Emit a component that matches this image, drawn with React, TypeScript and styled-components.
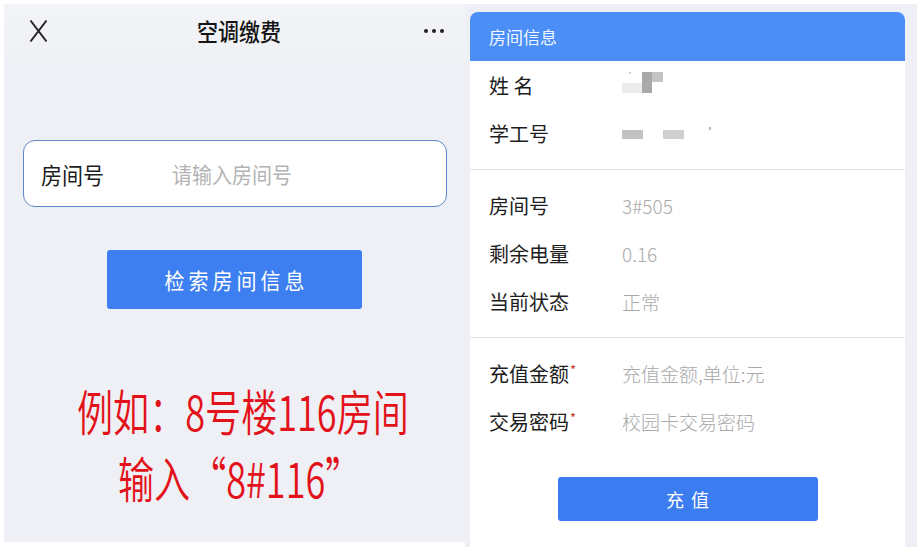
import React from "react"
import styled, { createGlobalStyle } from "styled-components"

const GlobalStyle = createGlobalStyle`
    html, body {
        margin: 0;
        padding: 0;
        background: #ffffff;
    }
    body {
        font-family: "Noto Sans CJK SC", "Noto Sans", sans-serif;
    }
`

const Page = styled.div`
    display: flex;
    width: 922px;
    height: 547px;
    padding: 4px 5px 0 4px;
    box-sizing: border-box;
    overflow: hidden;
`

// left screen: search
const SearchScreen = styled.div`
    width: 461px;
    height: 538px;
    background: #eef0f5;
    display: flex;
    flex-direction: column;
`

const TopBar = styled.div`
    height: 54px;
    display: flex;
    align-items: center;
    justify-content: space-between;
    padding: 0 21px 0 25px;
    background: linear-gradient(#f3f4f7, #f0f1f5);
`

const Title = styled.span`
    font-size: 21px;
    font-weight: 500;
    color: #151515;
    transform: scaleY(1.15);
    margin-left: 6px;
`

const Dots = styled.div`
    display: flex;
    gap: 4px;
    & span {
        width: 4px;
        height: 4px;
        border-radius: 50%;
        background: #222;
    }
`

const InputBox = styled.div`
    margin: 82px 18px 0 19px;
    height: 67px;
    box-sizing: border-box;
    border: 1.5px solid #5f88c6;
    border-radius: 12px;
    background: #fff;
    display: flex;
    align-items: center;
    padding-left: 17px;
`

const InputLabel = styled.span`
    width: 131px;
    font-size: 21px;
    color: #1c1c1c;
    transform: scaleY(1.1);
`

const Placeholder = styled.span`
    font-size: 20px;
    color: #b3b3b3;
    transform: scaleY(1.1);
`

const SearchButton = styled.div`
    align-self: center;
    margin-top: 43px;
    width: 255px;
    height: 59px;
    border-radius: 3px;
    background: #3d7ff1;
    color: #fff;
    display: flex;
    align-items: center;
    justify-content: center;
    font-size: 20px;
    letter-spacing: 4px;
    & span {
        transform: scaleY(1.1);
        margin-right: -4px;
    }
`

const Tip = styled.div`
    margin-top: 68px;
    color: #e3121a;
    font-family: "Noto Sans CJK SC", sans-serif;
`

const TipLine = styled.div<{ $indent: number }>`
    font-size: 44px;
    font-weight: 350;
    line-height: 67px;
    white-space: nowrap;
    padding-left: ${(p) => p.$indent}px;
    transform-origin: ${(p) => p.$indent}px 50%;
    transform: scale(0.82, 1.1);
`

// right screen: room info
const InfoScreen = styled.div`
    flex: 1;
    background: #eef0f6;
    padding: 8px 12px 0 5px;
    display: flex;
`

const Card = styled.div`
    flex: 1;
    background: #fff;
    border-radius: 8px 8px 0 0;
    overflow: hidden;
`

const CardHeader = styled.div`
    height: 49px;
    background: #4a8ef6;
    color: #f2f6ff;
    font-size: 17px;
    display: flex;
    align-items: center;
    padding-left: 19px;
`

const Section = styled.div<{ $first?: boolean; $last?: boolean }>`
    padding: ${(p) => (p.$first ? "0 0 12px" : "11px 0 12px")};
    border-bottom: ${(p) => (p.$last ? "none" : "1px solid #e6e4e2")};
    display: flex;
    flex-direction: column;
`

const Row = styled.div`
    height: 48px;
    display: flex;
    align-items: center;
    padding-left: 19px;
`

const Label = styled.span`
    width: 133px;
    font-size: 20px;
    color: #1d1d1d;
    white-space: pre;
    & sup {
        color: #c0392b;
        font-size: 13px;
        vertical-align: 7px;
        margin-left: 1px;
    }
`

const Value = styled.span`
    font-size: 19px;
    color: #a9a9a9;
    font-weight: 300;
`

const Blur = styled.svg`
    display: block;
`

const PayButton = styled.div`
    align-self: center;
    margin-top: 32px;
    width: 260px;
    height: 44px;
    border-radius: 3px;
    background: #3b7cf0;
    color: #fff;
    font-size: 18px;
    letter-spacing: 7px;
    display: flex;
    align-items: center;
    justify-content: center;
    & span {
        margin-right: -7px;
    }
`

const CloseIcon = () => (
    <svg width="19" height="24" viewBox="0 0 19 24">
        <path d="M1.5 1.5 L17.5 22.5 M17.5 1.5 L1.5 22.5" stroke="#222" strokeWidth="2" fill="none" />
    </svg>
)

const NameBlur = () => (
    <Blur width="44" height="26" viewBox="0 0 44 26">
        <rect x="0" y="11" width="20" height="10" fill="#ececec" />
        <rect x="20" y="0" width="10" height="21" fill="#a9a9a9" />
        <rect x="30" y="0" width="11" height="10" fill="#c4c4c4" />
        <rect x="7" y="0" width="2" height="2" fill="#d0d0d0" />
    </Blur>
)

const IdBlur = () => (
    <Blur width="92" height="16" viewBox="0 0 92 16">
        <rect x="0" y="5" width="21" height="9" fill="#c2c2c2" />
        <rect x="41" y="5" width="21" height="9" fill="#cfcfcf" />
        <rect x="87" y="2" width="2" height="3" fill="#bbb" />
    </Blur>
)

export default function App() {
    return (
        <Page>
            <GlobalStyle />
            <SearchScreen>
                <TopBar>
                    <CloseIcon />
                    <Title>空调缴费</Title>
                    <Dots>
                        <span />
                        <span />
                        <span />
                    </Dots>
                </TopBar>
                <InputBox>
                    <InputLabel>房间号</InputLabel>
                    <Placeholder>请输入房间号</Placeholder>
                </InputBox>
                <SearchButton>
                    <span>检索房间信息</span>
                </SearchButton>
                <Tip>
                    <TipLine $indent={73}>例如：8号楼116房间</TipLine>
                    <TipLine $indent={114}>输入“8#116”</TipLine>
                </Tip>
            </SearchScreen>
            <InfoScreen>
                <Card>
                    <CardHeader>房间信息</CardHeader>
                    <Section $first>
                        <Row>
                            <Label>姓 名</Label>
                            <NameBlur />
                        </Row>
                        <Row>
                            <Label>学工号</Label>
                            <IdBlur />
                        </Row>
                    </Section>
                    <Section>
                        <Row>
                            <Label>房间号</Label>
                            <Value>3#505</Value>
                        </Row>
                        <Row>
                            <Label>剩余电量</Label>
                            <Value>0.16</Value>
                        </Row>
                        <Row>
                            <Label>当前状态</Label>
                            <Value>正常</Value>
                        </Row>
                    </Section>
                    <Section $last>
                        <Row>
                            <Label>
                                充值金额<sup>*</sup>
                            </Label>
                            <Value>充值金额,单位:元</Value>
                        </Row>
                        <Row>
                            <Label>
                                交易密码<sup>*</sup>
                            </Label>
                            <Value>校园卡交易密码</Value>
                        </Row>
                        <PayButton>
                            <span>充值</span>
                        </PayButton>
                    </Section>
                </Card>
            </InfoScreen>
        </Page>
    )
}
